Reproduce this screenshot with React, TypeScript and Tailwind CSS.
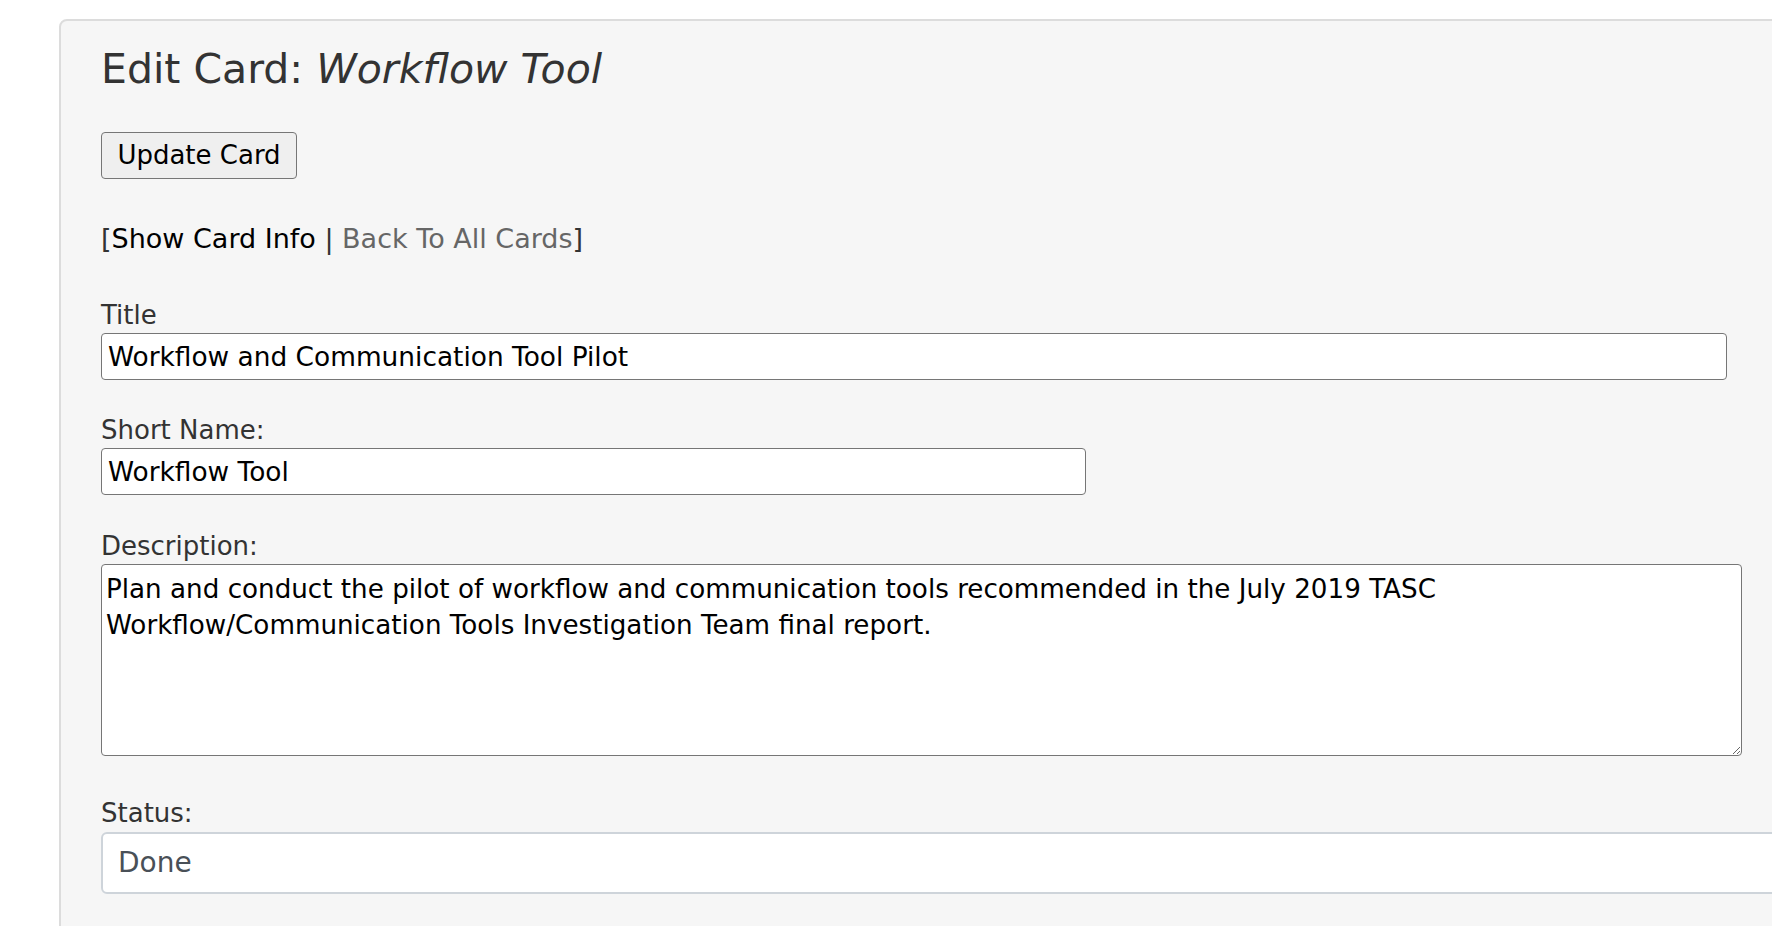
export default function App() {
  const font = { fontFamily: "'DejaVu Sans', sans-serif" };
  return (
    <div className="h-[926px] w-full overflow-hidden bg-white" style={font}>
      <div className="ml-[59px] mt-[19px] w-[1800px] h-[1000px] rounded-tl-lg border-2 border-[#dcdcdc] bg-[#f6f6f6] pl-[40px] pt-[20px]">
        <h1 className="text-[41px] leading-[56px] text-[#333]">
          Edit Card: <em>Workflow Tool</em>
        </h1>

        <button className="mt-[35px] h-[47px] w-[196px] rounded-[4px] border-[1.5px] border-[#767676] bg-[#efefef] text-[26px] text-black">
          Update Card
        </button>

        <p className="mt-[45px] text-[27px] leading-[30px] text-[#333]">
          [<span className="text-black">Show Card Info</span> | <span className="text-[#666]">Back To All Cards</span>]
        </p>

        {/* Title */}
        <label className="mt-[45px] block text-[26px] leading-[32px] text-[#333]">Title</label>
        <input
          defaultValue="Workflow and Communication Tool Pilot"
          className="mt-[2px] block h-[47px] w-[1626px] rounded-[4px] border-[1.5px] border-[#767676] bg-white px-[6px] text-[26.4px] text-black"
        />

        {/* Short name */}
        <label className="mt-[34px] block text-[26px] leading-[32px] text-[#333]">Short Name:</label>
        <input
          defaultValue="Workflow Tool"
          className="mt-[2px] block h-[47px] w-[985px] rounded-[4px] border-[1.5px] border-[#767676] bg-white px-[6px] text-[26.4px] text-black"
        />

        {/* Description */}
        <label className="mt-[35px] block text-[26px] leading-[32px] text-[#333]">Description:</label>
        <textarea
          defaultValue="Plan and conduct the pilot of workflow and communication tools recommended in the July 2019 TASC Workflow/Communication Tools Investigation Team final report."
          className="mt-[2px] block h-[192px] w-[1641px] rounded-[4px] border-[1.5px] border-[#767676] bg-white px-[4px] py-[6px] text-[26.2px] leading-[36px] text-black"
        />

        {/* Status */}
        <label className="mt-[41px] block text-[26px] leading-[32px] text-[#333]">Status:</label>
        <div className="mt-[3px] flex h-[62px] w-[1700px] items-center rounded-[6px] border-2 border-[#ced4da] bg-white px-[15px] text-[28px] text-[#495057]">
          Done
        </div>
      </div>
    </div>
  );
}
